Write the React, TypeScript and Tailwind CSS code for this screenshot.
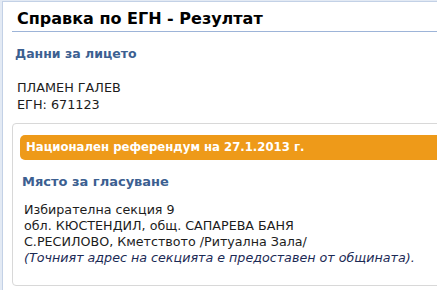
export default function App() {
  const font = { fontFamily: '"DejaVu Sans", Verdana, sans-serif' };

  return (
    <div className="h-[290px] w-[437px] overflow-hidden bg-[#e3eaf4] pl-[2px] pt-[1px]" style={font}>
      <div className="h-full border-l border-t border-[#c3d1e6] bg-white pl-[9px]">
        {/* заглавие */}
        <div className="h-[30px] border-b border-[#9db4d8] pl-[5px] pt-[7px]">
          <h1 className="text-[16px] leading-[20px] font-bold text-black">Справка по ЕГН - Резултат</h1>
        </div>

        <h2 className="mt-[13px] pl-[3px] text-[12.5px] leading-[18px] font-bold text-[#3c5f91]">Данни за лицето</h2>
        <div className="mt-[16px] pl-[5px] text-[12.8px] leading-[17px] text-[#1c1c1c]">
          <p>ПЛАМЕН ГАЛЕВ</p>
          <p>ЕГН: 671123</p>
        </div>

        {/* секция */}
        <div className="mt-[10px] h-[163px] w-[460px] rounded-[4px] border border-[#d8d8d8] pl-[7px] pt-[11px]">
          <div className="flex h-[25px] items-center rounded-l-[5px] bg-[#ee9a19] pl-[6px]">
            <span className="text-[11.7px] font-bold text-white">Национален референдум на 27.1.2013 г.</span>
          </div>
          <h3 className="mt-[13px] pl-[2px] text-[13px] leading-[18px] font-bold text-[#3c5f91]">Място за гласуване</h3>
          <div className="mt-[11px] pl-[4px] text-[12.7px] leading-[16px] text-[#1c1c1c]">
            <p>Избирателна секция 9</p>
            <p>обл. КЮСТЕНДИЛ, общ. САПАРЕВА БАНЯ</p>
            <p>С.РЕСИЛОВО, Кметството /Ритуална Зала/</p>
            <p className="italic text-[#1b2a55]">(Точният адрес на секцията е предоставен от общината).</p>
          </div>
        </div>
      </div>
    </div>
  );
}
